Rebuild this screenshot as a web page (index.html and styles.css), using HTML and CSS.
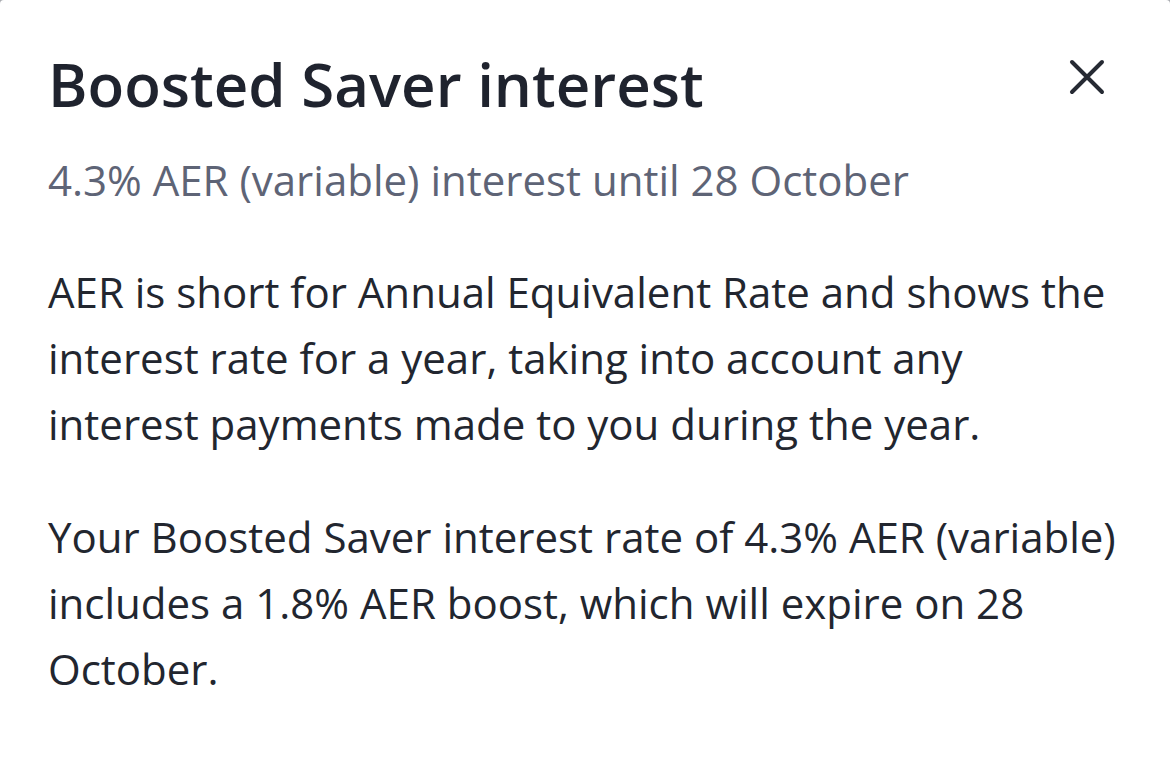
FILE: index.html
```html
<!DOCTYPE html>
<html lang="en">
<head>
<meta charset="utf-8">
<title>Boosted Saver interest</title>
<link rel="stylesheet" href="styles.css">
</head>
<body>
<div class="sheet">
  <div class="header">
    <h1 class="title">Boosted Saver interest</h1>
    <button class="close" aria-label="Close">
      <svg width="36" height="36" viewBox="0 0 36 36" fill="none" stroke="#262a33" stroke-width="4" stroke-linecap="round">
        <path d="M3 3 L33 33 M33 3 L3 33"/>
      </svg>
    </button>
  </div>
  <p class="subtitle">4.3% AER (variable) interest until 28 October</p>
  <p class="body">AER is short for Annual Equivalent Rate and shows the interest rate for a year, taking into account any interest payments made to you during the year.</p>
  <p class="body">Your Boosted Saver interest rate of 4.3% AER (variable) includes a 1.8% AER boost, which will expire on 28 October.</p>
</div>
</body>
</html>
```
FILE: styles.css
```css
html, body {
  margin: 0;
  padding: 0;
  background: #a9abb0;
  height: 100%;
}
body {
  font-family: "Open Sans", "Noto Sans", sans-serif;
  overflow: hidden;
}
.sheet {
  background: #ffffff;
  min-height: 100%;
  box-sizing: border-box;
  padding: 44px 48px 0 48px;
  border-radius: 4px 4px 0 0;
}
.header {
  display: flex;
  align-items: flex-start;
  justify-content: space-between;
}
.title {
  margin: 0;
  font-size: 60px;
  line-height: 80px;
  font-weight: 600;
  color: #1f232e;
}
.close {
  border: 0;
  background: none;
  padding: 0;
  margin: 15px 17px 0 0;
  width: 36px;
  height: 36px;
  display: flex;
}
.subtitle {
  margin: 23px 0 0 0;
  font-size: 42px;
  line-height: 66px;
  color: #5e6476;
}
.body {
  margin: 46px 0 0 0;
  font-size: 42px;
  line-height: 66px;
  color: #22262f;
}
.body + .body {
  margin-top: 47px;
}
```
